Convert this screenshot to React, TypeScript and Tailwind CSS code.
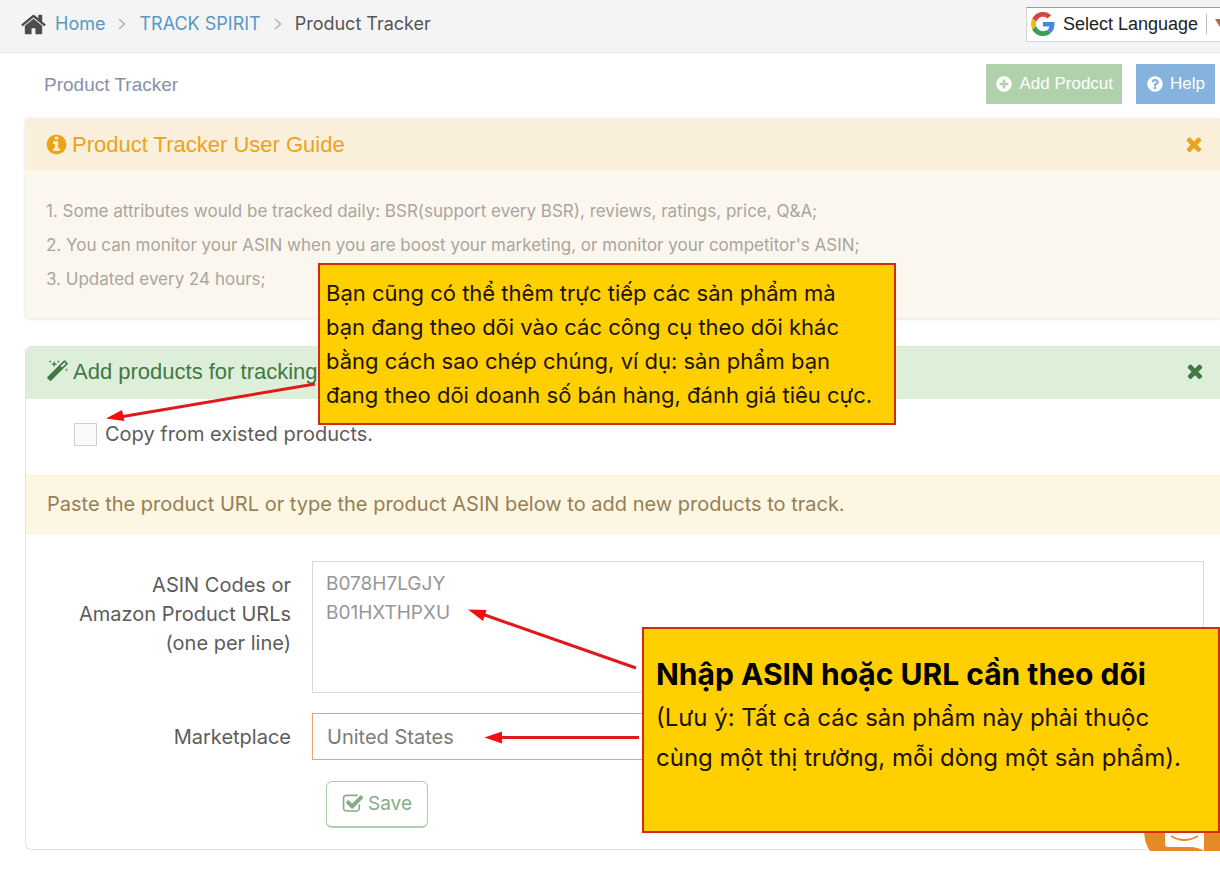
import React, { useState } from "react";

const DISC =
  "q0 209-103 385.5t-279.5 279.5-385.5 103-385.5-103-279.5-279.5-103-385.5 103-385.5 279.5-279.5 385.5-103 385.5 103 279.5 279.5 103 385.5z";

const ICONS = {
  home: "M1472 992v480q0 26-19 45t-45 19h-384v-384h-256v384h-384q-26 0-45-19t-19-45v-480q0-1 .5-3t.5-3l575-474 575 474q1 2 1 6zm223-69l-62 74q-8 9-21 11h-3q-13 0-21-7l-692-577-692 577q-12 8-24 7-13-2-21-11l-62-74q-8-10-7-23.5t11-21.5l719-599q32-26 76-26t76 26l244 204v-195q0-14 9-23t23-9h192q14 0 23 9t9 23v408l219 182q10 8 11 21.5t-7 23.5z",
  info:
    "M1152 1376v-160q0-14-9-23t-23-9h-96v-512q0-14-9-23t-23-9h-320q-14 0-23 9t-9 23v160q0 14 9 23t23 9h96v320h-96q-14 0-23 9t-9 23v160q0 14 9 23t23 9h448q14 0 23-9t9-23zm-128-896v-160q0-14-9-23t-23-9h-192q-14 0-23 9t-9 23v160q0 14 9 23t23 9h192q14 0 23-9t9-23zm640 416" +
    DISC,
  plus:
    "M1344 960v-128q0-26-19-45t-45-19h-256v-256q0-26-19-45t-45-19h-128q-26 0-45 19t-19 45v256h-256q-26 0-45 19t-19 45v128q0 26 19 45t45 19h256v256q0 26 19 45t45 19h128q26 0 45-19t19-45v-256h256q26 0 45-19t19-45zm320-64" +
    DISC,
  question:
    "M1024 1376v-192q0-14-9-23t-23-9h-192q-14 0-23 9t-9 23v192q0 14 9 23t23 9h192q14 0 23-9t9-23zm256-672q0-88-55.5-163t-138.5-116-170-41q-243 0-371 213-15 24 8 42l132 100q7 6 19 6 16 0 25-12 53-68 86-92 34-24 86-24 48 0 85.5 26t37.5 59q0 38-20 61t-68 45q-63 28-115.5 86.5t-52.5 125.5v36q0 14 9 23t23 9h192q14 0 23-9t9-23q0-19 21.5-49.5t54.5-49.5q32-18 49-28.5t46-35 44.5-48 28-60.5 12.5-81zm384 192" +
    DISC,
  times:
    "M1490 1322q0 40-28 68l-136 136q-28 28-68 28t-68-28l-294-294-294 294q-28 28-68 28t-68-28l-136-136q-28-28-28-68t28-68l294-294-294-294q-28-28-28-68t28-68l136-136q28-28 68-28t68 28l294 294 294-294q28-28 68-28t68 28l136 136q28 28 28 68t-28 68l-294 294 294 294q28 28 28 68z",
  magic:
    "M1254 581l293-293-107-107-293 293zm447-293q0 27-18 45l-1286 1286q-18 18-45 18t-45-18l-198-198q-18-18-18-45t18-45l1286-1286q18-18 45-18t45 18l198 198q18 18 18 45zm-1351-190l98 30-98 30-30 98-30-98-98-30 98-30 30-98zm350 162l196 60-196 60-60 196-60-196-196-60 196-60 60-196zm930 478l98 30-98 30-30 98-30-98-98-30 98-30 30-98zm-640-640l98 30-98 30-30 98-30-98-98-30 98-30 30-98z",
  check:
    "M1472 930v318q0 119-84.5 203.5t-203.5 84.5h-832q-119 0-203.5-84.5t-84.5-203.5v-832q0-119 84.5-203.5t203.5-84.5h832q63 0 117 25 15 7 18 23 3 17-9 29l-49 49q-10 10-23 10-3 0-9-2-23-6-45-6h-832q-66 0-113 47t-47 113v832q0 66 47 113t113 47h832q66 0 113-47t47-113v-254q0-13 9-22l64-64q10-10 23-10 6 0 12 3 20 8 20 29zm231-489l-814 814q-24 24-57 24t-57-24l-430-430q-24-24-24-57t24-57l110-110q24-24 57-24t57 24l263 263 647-647q24-24 57-24t57 24l110 110q24 24 24 57t-24 57z",
};

function Icon({ name, className }: { name: keyof typeof ICONS; className: string }) {
  return (
    <svg viewBox="0 0 1792 1792" fill="currentColor" aria-hidden="true" className={className}>
      <path d={ICONS[name]} />
    </svg>
  );
}

function GoogleLogo() {
  return (
    <svg viewBox="0 0 48 48" aria-hidden="true" className="size-6 shrink-0">
      <path fill="#d9443f" d="M24 9.5c3.54 0 6.71 1.22 9.21 3.6l6.85-6.85C35.9 2.38 30.47 0 24 0 14.62 0 6.51 5.38 2.56 13.22l7.98 6.19C12.43 13.72 17.74 9.5 24 9.5z" />
      <path fill="#4a86e0" d="M46.98 24.55c0-1.57-.15-3.09-.38-4.55H24v9.02h12.94c-.58 2.96-2.26 5.48-4.78 7.18l7.73 6c4.51-4.18 7.09-10.36 7.09-17.65z" />
      <path fill="#eebb1c" d="M10.53 28.59c-.48-1.45-.76-2.99-.76-4.59s.27-3.14.76-4.59l-7.98-6.19C.92 16.46 0 20.12 0 24c0 3.88.92 7.54 2.56 10.78l7.97-6.19z" />
      <path fill="#389f55" d="M24 48c6.48 0 11.93-2.13 15.89-5.81l-7.73-6c-2.15 1.45-4.92 2.3-8.16 2.3-6.26 0-11.57-4.22-13.47-9.91l-7.98 6.19C6.51 42.62 14.62 48 24 48z" />
    </svg>
  );
}

function Chevron() {
  return (
    <svg viewBox="0 0 8 12" fill="none" stroke="#b3b3b3" strokeWidth="1.5" aria-hidden="true" className="h-3 w-2">
      <path d="M1 1l5.500 5L1 11" />
    </svg>
  );
}

function Header() {
  return (
    <header className="flex h-[53px] items-center justify-between border-b border-[#e6e6e6] bg-[#f4f4f4] pl-5">
      <nav aria-label="Breadcrumb" className="flex items-center gap-[13px] pb-1 text-[18px] leading-6">
        <a href="#home" className="flex items-center gap-2 text-[#5a97c3]">
          <Icon name="home" className="size-[27px] text-[#4d4d4d]" />
          Home
        </a>
        <Chevron />
        <a href="#track-spirit" className="text-[#5a97c3]">TRACK SPIRIT</a>
        <Chevron />
        <span className="text-[#555]">Product Tracker</span>
      </nav>
      <button
        type="button"
        className="mb-1 -mr-3 flex h-[35px] items-center gap-2 border border-[#d5d5d5] border-t-[#9b9b9b] bg-white pl-1 pr-1 font-['Liberation_Sans',Arial,sans-serif] text-[18px] text-[#222]"
      >
        <GoogleLogo />
        <span>Select Language</span>
        <span className="h-5 w-px bg-[#bbb]" />
        <svg viewBox="0 0 12 12" aria-hidden="true" className="size-3">
          <path fill="#b5683c" d="M0 1h12L6 11z" />
        </svg>
      </button>
    </header>
  );
}

function Callout({ className, children }: { className: string; children: React.ReactNode }) {
  return (
    <aside className={`absolute z-20 border-2 border-[#d42a10] bg-[#ffcf00] text-[#1d1400] ${className}`}>
      {children}
    </aside>
  );
}

export default function App() {
  const [guideOpen, setGuideOpen] = useState(true);
  const [formOpen, setFormOpen] = useState(true);
  return (
    <div className="relative min-h-screen overflow-hidden bg-white font-['Inter','Noto_Sans',sans-serif]">
      <Header />

      <main className="pl-[25px]">
        <div className="flex h-[65px] items-center justify-between pb-1 pl-[19px] pr-[5px] font-['Liberation_Sans',Arial,sans-serif]">
          <h1 className="pt-1 text-[19px] text-[#8791a5]">Product Tracker</h1>
          <div className="flex gap-[14px] text-[17px] text-white">
            <button type="button" className="flex h-10 items-center gap-[6px] bg-[#b0d1ab] px-[9px]">
              <Icon name="plus" className="size-[18px]" />
              Add Prodcut
            </button>
            <button type="button" className="flex h-10 items-center gap-[6px] bg-[#86b3dd] px-[10px]">
              <Icon name="question" className="size-[18px]" />
              Help
            </button>
          </div>
        </div>

        <section className="rounded-l-[4px] bg-[#fcf7ee] shadow-[0_1px_3px_rgba(0,0,0,0.12)]">
          <div className="flex h-[52px] items-center justify-between rounded-tl-[4px] bg-[#faefda] pl-5 pr-[15px] text-[#eca31c]">
            <h2 className="flex items-center gap-1 font-['Liberation_Sans',Arial,sans-serif] text-[22px]">
              <Icon name="info" className="size-[23px]" />
              Product Tracker User Guide
            </h2>
            <button type="button" aria-label="Close guide" onClick={() => setGuideOpen(false)}>
              <Icon name="times" className="size-[22px]" />
            </button>
          </div>
          {guideOpen && (
            <div className="px-[21px] pb-[22px] pt-6 text-[17px] leading-[34px] text-[#a9a59f]">
              <p>1. Some attributes would be tracked daily: BSR(support every BSR), reviews, ratings, price, Q&amp;A;</p>
              <p>2. You can monitor your ASIN when you are boost your marketing, or monitor your competitor's ASIN;</p>
              <p>3. Updated every 24 hours;</p>
            </div>
          )}
        </section>

        <section className="mt-7 rounded-l-[6px] border-y border-l border-[#d9ead3]">
          <div className="flex h-[52px] items-center justify-between rounded-tl-[5px] bg-[#deefd9] pb-1 pl-5 pr-[14px] text-[#437845]">
            <h2 className="flex items-center gap-1 font-['Liberation_Sans',Arial,sans-serif] text-[22px]">
              <Icon name="magic" className="size-[23px]" />
              Add products for tracking
            </h2>
            <button type="button" aria-label="Close form" onClick={() => setFormOpen(false)}>
              <Icon name="times" className="size-[22px]" />
            </button>
          </div>
          {formOpen && (
            <form onSubmit={(e) => e.preventDefault()} className="text-[20px] text-[#5c5c5c]">
              <div className="flex h-[76px] items-start pl-12 pt-[23px]">
                <label className="flex items-center gap-2 leading-6">
                  <input
                    type="checkbox"
                    className="size-[23px] appearance-none border border-[#cfcfcf] bg-[#fafafa] checked:bg-[#437845]"
                  />
                  Copy from existed products.
                </label>
              </div>
              <p className="border-y border-[#faf0d2] bg-[#fdf6e2] px-[21px] py-4 leading-[25px] text-[#957f58]">
                Paste the product URL or type the product ASIN below to add new products to track.
              </p>
              <div className="grid grid-cols-[265px_1fr] gap-x-[21px] pb-[21px] pr-4 pt-[27px]">
                <label htmlFor="asin" className="pt-[10px] text-right leading-[29px]">
                  ASIN Codes or
                  <br />
                  Amazon Product URLs
                  <br />
                  (one per line)
                </label>
                <textarea
                  id="asin"
                  defaultValue={"B078H7LGJY\nB01HXTHPXU"}
                  className="h-[132px] resize-none border border-[#dadada] bg-white px-[13px] py-[7px] text-[19px] leading-[29px] text-[#969696]"
                />
                <label htmlFor="marketplace" className="mt-5 self-center text-right">
                  Marketplace
                </label>
                <select
                  id="marketplace"
                  className="mt-5 h-[47px] appearance-none rounded-none border border-[#e8a469] bg-white px-[14px] text-[#7b7b7b]"
                >
                  <option>United States</option>
                </select>
                <div className="col-start-2 pl-[14px] pt-[21px]">
                  <button
                    type="submit"
                    className="flex h-[47px] items-center gap-1 rounded-[6px] border border-b-2 border-[#acd0ab] px-[15px] text-[19px] text-[#87ab87]"
                  >
                    <Icon name="check" className="size-[22px]" />
                    Save
                  </button>
                </div>
              </div>
            </form>
          )}
        </section>
      </main>

      <svg viewBox="0 0 80 22" aria-hidden="true" className="absolute right-0 top-[829px] z-10 h-[22px] w-20">
        <path fill="#e58a25" d="M4 0Q4 14 10 22H80V0z" />
        <path fill="#fff" d="M25 0h39v22Q58 18 50 18H28Q25 18 25 15z" />
        <path fill="none" stroke="#e58a25" strokeWidth="2" d="M31 7q13 8 27 0" />
      </svg>

      <Callout className="left-[318px] top-[263px] w-[578px] px-[6px] pb-[11px] pt-[11px] text-[22px] leading-[34px]">
        Bạn cũng có thể thêm trực tiếp các sản phẩm mà
        <br />
        bạn đang theo dõi vào các công cụ theo dõi khác
        <br />
        bằng cách sao chép chúng, ví dụ: sản phẩm bạn
        <br />
        đang theo dõi doanh số bán hàng, đánh giá tiêu cực.
      </Callout>

      <Callout className="right-0 top-[627px] h-[206px] w-[578px] px-3 pt-[25px] text-[24px] leading-10">
        <h3 className="text-[30px] font-bold text-black">Nhập ASIN hoặc URL cần theo dõi</h3>
        <p className="pt-1">
          (Lưu ý: Tất cả các sản phẩm này phải thuộc
          <br />
          cùng một thị trường, mỗi dòng một sản phẩm).
        </p>
      </Callout>

      <svg viewBox="0 0 560 370" aria-hidden="true" className="pointer-events-none absolute left-[100px] top-[380px] z-30 h-[370px] w-[560px]">
        <g stroke="#df1a1a" strokeWidth="3">
          <path d="M215 4L20 37" />
          <path d="M536 288L382 234" />
          <path d="M539 357.500H400" />
        </g>
        <g fill="#f30d0d">
          <path d="M6 38.500L22 30L24.500 41z" />
          <path d="M368 229.500L386.500 230L383 241z" />
          <path d="M384.500 357.500L402 351.500V363.500z" />
        </g>
      </svg>
    </div>
  );
}
